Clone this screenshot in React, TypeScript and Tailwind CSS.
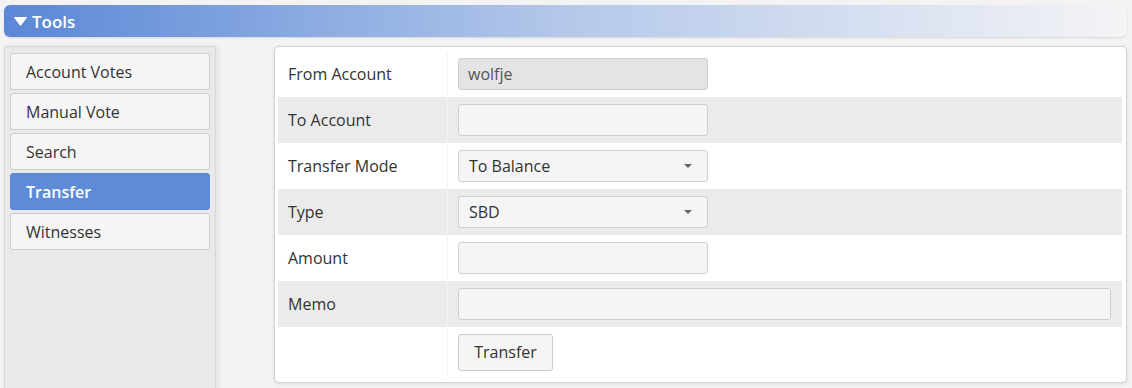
import React from "react";

const rows: { label: string; kind: "input" | "select" | "wide" | "disabled" | "button"; value?: string; gray: boolean }[] = [
  { label: "From Account", kind: "disabled", value: "wolfje", gray: false },
  { label: "To Account", kind: "input", gray: true },
  { label: "Transfer Mode", kind: "select", value: "To Balance", gray: false },
  { label: "Type", kind: "select", value: "SBD", gray: true },
  { label: "Amount", kind: "input", gray: false },
  { label: "Memo", kind: "wide", gray: true },
  { label: "", kind: "button", gray: false },
];

const nav = ["Account Votes", "Manual Vote", "Search", "Transfer", "Witnesses"];

function Field({ kind, value }: { kind: string; value?: string }) {
  if (kind === "disabled")
    return (
      <div className="w-[250px] h-[32px] rounded-[3px] border border-[#cfcfcf] bg-[#e4e4e4] px-[9px] flex items-center text-[16px] text-[#555]">
        {value}
      </div>
    );
  if (kind === "input")
    return <div className="w-[250px] h-[32px] rounded-[3px] border border-[#cfcfcf] bg-[#f5f5f5]" />;
  if (kind === "wide")
    return <div className="w-full h-[32px] rounded-[3px] border border-[#cfcfcf] bg-[#f5f5f5]" />;
  if (kind === "select")
    return (
      <div className="w-[250px] h-[32px] rounded-[3px] border border-[#cfcfcf] bg-[#f5f5f5] pl-[10px] pr-[15px] flex items-center justify-between text-[16px] text-[#333]">
        <span>{value}</span>
        <svg width="8" height="4" viewBox="0 0 8 4">
          <path d="M0 0 L8 0 L4 4 Z" fill="#666" />
        </svg>
      </div>
    );
  return (
    <div className="w-[95px] h-[37px] rounded-[3px] border border-[#cccccc] bg-[#f5f5f5] flex items-center justify-center text-[16px] text-[#333]">
      Transfer
    </div>
  );
}

export default function App() {
  return (
    <div
      className="w-[1132px] h-[388px] overflow-hidden bg-[#f3f3f3] pt-[5px] px-[4px]"
      style={{ fontFamily: '"Open Sans", "Liberation Sans", sans-serif' }}
    >
      <div className="h-[32px] rounded-[6px] bg-gradient-to-r from-[#5a87d6] via-[#b4c8ea] to-[#f4f4f6] shadow-[0_1px_2px_rgba(0,0,0,0.12)] flex items-center pl-[10px] gap-[5px] mr-[1px]">
        <svg width="13" height="9" viewBox="0 0 13 9">
          <path d="M0.5 0.5 L12.5 0.5 L6.5 8.5 Z" fill="#fff" strokeLinejoin="round" stroke="#fff" />
        </svg>
        <span className="text-white font-semibold text-[17px] leading-none">Tools</span>
      </div>
      <div className="flex mt-[9px] gap-[58px]">
        <div className="w-[212px] h-[360px] bg-[#e9e9e9] border border-[#d6d6d6] rounded-t-[3px] shadow-[2px_0_6px_rgba(0,0,0,0.08)] px-[5px] pt-[6px] flex flex-col gap-[3px]">
          {nav.map((n) => (
            <div
              key={n}
              className={
                n === "Transfer"
                  ? "h-[37px] rounded-[3px] border border-[#5a87d6] bg-[#5d8bd8] text-white font-semibold flex items-center pl-[15px] text-[16px]"
                  : "h-[37px] rounded-[3px] border border-[#cdcdcd] bg-[#f5f5f5] text-[#333] flex items-center pl-[15px] text-[16px]"
              }
            >
              {n}
            </div>
          ))}
        </div>
        <div className="w-[853px] h-[337px] bg-white border border-[#d3d3d3] rounded-[5px] shadow-[0_1px_4px_rgba(0,0,0,0.1)] pl-[3px] pr-[4px] pt-[4px]">
          {rows.map((r, i) => (
            <div
              key={i}
              className={`flex ${r.kind === "button" ? "h-[50px]" : "h-[46px]"} ${r.gray ? "bg-[#ebebeb]" : "bg-white"}`}
            >
              <div className="w-[170px] shrink-0 flex items-center pl-[10px] text-[16px] text-[#333] border-r border-[#f3f3f3]">
                {r.label}
              </div>
              <div className="flex-1 flex items-center pl-[10px] pr-[11px]">
                <Field kind={r.kind} value={r.value} />
              </div>
            </div>
          ))}
        </div>
      </div>
    </div>
  );
}
